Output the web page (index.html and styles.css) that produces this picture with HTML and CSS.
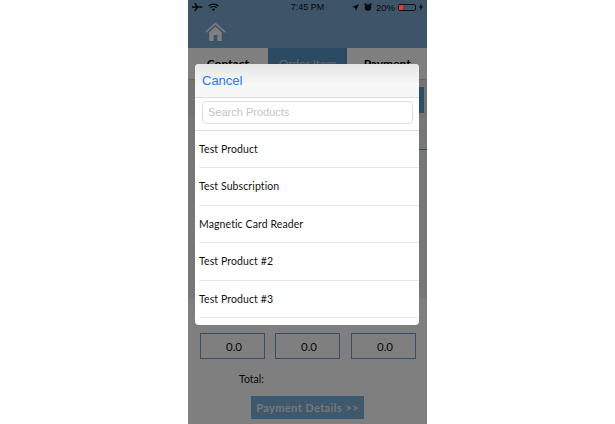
FILE: index.html
```html
<!DOCTYPE html>
<html lang="en">
<head>
    <meta charset="UTF-8">
    <title>Order Item</title>
    <link rel="stylesheet" href="styles.css">
</head>
<body>
    <div class="phone">
        <div class="status">
            <div class="status-left">
                <svg width="11" height="10" viewBox="0 0 13 10"><path class="ico" d="M0 4.200h4.400L2.800 0h1.300l3 4.200h3.400c1.200 0 2.200.3 2.200.8s-1 .8-2.200.8H7.100L4.100 10H2.800l1.600-4.200H0z"/></svg>
                <svg width="11" height="9" viewBox="0 0 11 9"><path class="ico-line" d="M.7 3a7 7 0 0 1 9.600 0M2.300 4.800a4.700 4.700 0 0 1 6.400 0"/><path class="ico" d="M3.900 6.300a2.300 2.300 0 0 1 3.200 0L5.500 8.200z"/></svg>
            </div>
            <div class="status-time">7:45 PM</div>
            <div class="status-right">
                <svg class="ico-arrow" width="7" height="7" viewBox="0 0 8 8"><path class="ico" d="M8 0L4.500 8 3.600 4.400 0 3.500z"/></svg>
                <svg class="ico-alarm" width="8" height="8" viewBox="0 0 9 9"><circle class="ico" cx="4.500" cy="5" r="3.600"/><path class="ico" d="M0 2l2-2 1 .8-2 2zM9 2L7 0 6 .8l2 2z"/></svg>
                <span class="pct">20%</span>
                <div class="battery"><div class="battery-level"></div></div>
                <svg width="4" height="8" viewBox="0 0 4 8"><path class="ico" d="M2.600 0L0 4.500h1.600L1.200 8 4 3.300H2.300z"/></svg>
            </div>
        </div>
        <div class="header">
            <svg class="home" width="21" height="19" viewBox="0 0 21 19"><path class="home-part" d="M.3 9.800L10.500.5l10.200 9.300-.9 1L10.500 2.400 1.200 10.800z"/><path class="home-part" d="M4.300 10.300l6.200-5.500 6.200 5.500V19h-4.300v-6H8.600v6H4.300z"/></svg>
        </div>
        <div class="tabs">
            <div class="tab">Contact</div>
            <div class="tab tab-active">Order Item</div>
            <div class="tab">Payment</div>
        </div>
        <div class="section-row">
            <div class="behind-block"></div>
        </div>
        <div class="section-mid">
            <div class="behind-line"></div>
        </div>
        <div class="section-bottom">
            <div class="amounts">
                <div class="amount">0.0</div>
                <div class="amount">0.0</div>
                <div class="amount">0.0</div>
            </div>
            <div class="total">Total:</div>
            <div class="pay-btn">Payment Details &gt;&gt;</div>
        </div>
        <div class="overlay"></div>
        <div class="modal">
            <div class="modal-top">Cancel</div>
            <div class="search-bar">
                <div class="search-input">Search Products</div>
            </div>
            <div class="item">Test Product</div>
            <div class="item">Test Subscription</div>
            <div class="item">Magnetic Card Reader</div>
            <div class="item">Test Product #2</div>
            <div class="item">Test Product #3</div>
        </div>
    </div>
</body>
</html>
```
FILE: styles.css
```css
html, body {
    margin: 0;
    padding: 0;
    background-color: white;
    height: 424px;
    overflow: hidden;
}
.phone {
    position: relative;
    width: 239px;
    height: 424px;
    margin: 0 auto;
    background-color: white;
    font-family: 'Lato', 'Open Sans', sans-serif;
    overflow: hidden;
}
.status {
    display: flex;
    align-items: center;
    justify-content: space-between;
    height: 14px;
    padding: 0 4px;
    background-color: #7da9d2;
    color: #111;
}
.status-left, .status-right {
    display: flex;
    align-items: center;
    gap: 5px;
    width: 80px;
}
.status-right {
    justify-content: flex-end;
    gap: 3px;
}
.ico-arrow {
    margin-right: 2px;
}
.ico-alarm {
    margin-right: 1px;
}
.status-time {
    font-family: 'Liberation Sans', sans-serif;
    font-size: 9px;
}
.pct {
    font-family: 'Liberation Sans', sans-serif;
    font-size: 9.500px;
}
.ico {
    fill: #111;
}
.ico-line {
    fill: none;
    stroke: #111;
    stroke-width: 1.300;
}
.battery {
    width: 18px;
    height: 7px;
    border: 1px solid #222;
    border-radius: 2px;
    box-sizing: border-box;
}
.battery-level {
    position: relative;
    z-index: 1;
    width: 4px;
    height: 100%;
    background-color: #f4362c;
}
.header {
    height: 34px;
    box-sizing: border-box;
    padding: 8px 0 0 17px;
    background-color: #7da9d2;
}
.home {
    display: block;
}
.home-part {
    fill: #fff;
}
.tabs {
    display: flex;
    height: 32px;
    box-sizing: border-box;
    background-color: white;
    border-bottom: 1px solid #ccc;
}
.tab {
    flex: 1;
    padding-top: 8px;
    text-align: center;
    font-size: 12px;
    font-weight: bold;
    color: black;
}
.tab-active {
    background-color: #5494c6;
    color: #ccc;
    font-weight: normal;
}
.overlay {
    position: absolute;
    top: 0;
    left: 0;
    width: 100%;
    height: 100%;
    background-color: rgba(0, 0, 0, 0.5);
}
.section-row {
    height: 38px;
    box-sizing: border-box;
    padding: 7px 3px 0 100px;
    background-color: #e6e6e6;
}
.behind-block {
    height: 26px;
    background-color: #5a9ad0;
}
.section-mid {
    height: 180px;
    padding: 31px 0 0 100px;
    box-sizing: border-box;
    background-color: #eee;
}
.behind-line {
    height: 1px;
    background-color: #5a9ad0;
}
.amounts {
    display: flex;
    gap: 10px;
    margin: 35px 0 0 12px;
}
.amount {
    width: 65px;
    height: 26px;
    line-height: 25px;
    box-sizing: border-box;
    padding-left: 3px;
    border: 1px solid #6f9fc8;
    text-align: center;
    font-size: 11.500px;
    color: #111;
}
.amount:last-child {
    margin-left: 1px;
}
.total {
    margin: 14px 0 0 51px;
    line-height: 13px;
    font-size: 10.500px;
    color: #111;
}
.pay-btn {
    width: 113px;
    height: 23px;
    line-height: 23px;
    margin: 10px 0 0 63px;
    background-color: #7cb0dc;
    color: #eee;
    font-size: 11px;
    font-weight: bold;
    letter-spacing: 0.4px;
    text-align: center;
}
.modal {
    position: absolute;
    top: 64px;
    left: 7px;
    width: 224px;
    height: 261px;
    border-radius: 4px;
    background-color: white;
    overflow: hidden;
}
.modal-top {
    height: 33px;
    line-height: 33px;
    padding-left: 7px;
    background: linear-gradient(#e6e6e6, #f7f7f7 60%);
    border-bottom: 1px solid #ddd;
    color: #157efb;
    font-family: 'Liberation Sans', sans-serif;
    font-size: 13px;
}
.search-bar {
    height: 33px;
    padding: 3px 6px 0 7px;
    box-sizing: border-box;
    border-bottom: 1px solid #ddd;
}
.search-input {
    height: 23px;
    line-height: 21px;
    box-sizing: border-box;
    padding-left: 5px;
    border: 1px solid #ddd;
    border-radius: 4px;
    color: #c4c4c8;
    font-family: 'Liberation Sans', sans-serif;
    font-size: 11px;
}
.item {
    height: 37.400px;
    line-height: 36.500px;
    margin-left: 4px;
    box-sizing: border-box;
    border-bottom: 1px solid #e8e8ea;
    color: #111;
    font-size: 10.500px;
    letter-spacing: 0.1px;
}
```
